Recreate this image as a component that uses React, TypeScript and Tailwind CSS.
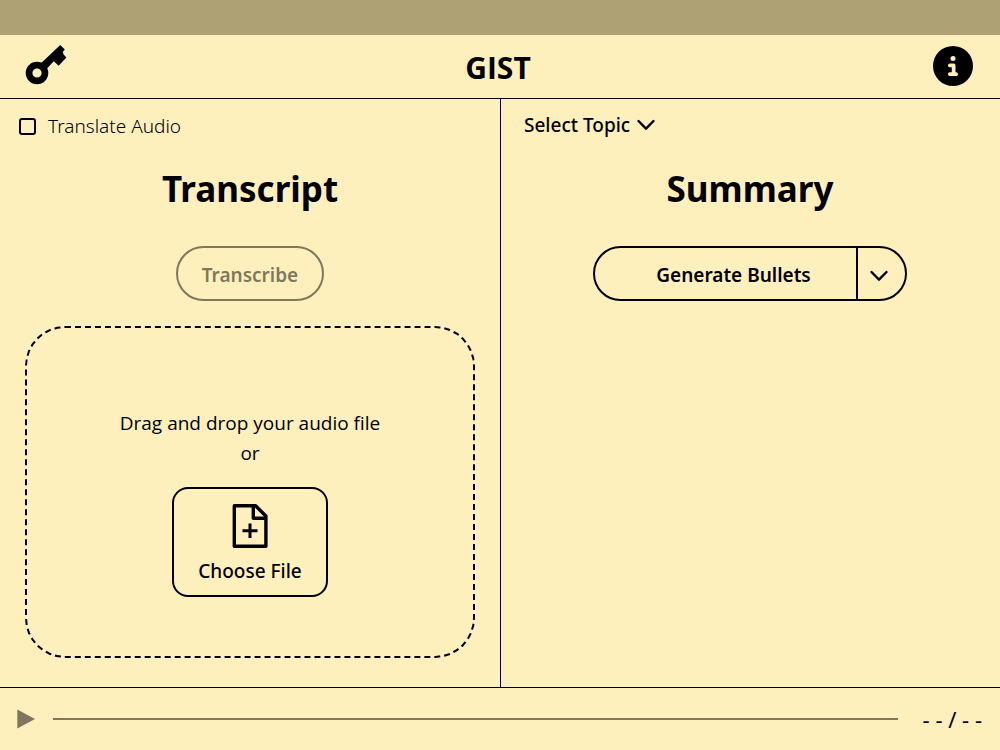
import { useState } from "react";
import { FaCircleInfo } from "react-icons/fa6";

function KeyIcon() {
  return (
    <svg viewBox="0 0 42 42" className="size-[42px]" fill="currentColor" aria-hidden="true">
      <path
        fillRule="evenodd"
        d="M12 16.7a11.3 11.3 0 1 0 0 22.6a11.3 11.3 0 0 0 0-22.6zM12 23.4a4.6 4.6 0 1 1 0 9.2a4.6 4.6 0 0 1 0-9.2z"
      />
      <path d="M15.5 18.8L35.2 0L39.8 4.5L37.8 7L38.6 9.6L41.4 12.6L33.6 20.8L28.8 16.2L21.5 24Z" />
    </svg>
  );
}

function Chevron() {
  return (
    <svg
      viewBox="0 0 18 12"
      className="h-3 w-[18px]"
      fill="none"
      stroke="currentColor"
      strokeWidth="2.4"
      strokeLinecap="round"
      strokeLinejoin="round"
      aria-hidden="true"
    >
      <path d="M1.5 2L9 9.7L16.5 2" />
    </svg>
  );
}

function NewFileIcon() {
  return (
    <svg
      viewBox="0 0 36 44"
      className="h-11 w-9"
      fill="none"
      stroke="currentColor"
      strokeWidth="3.4"
      strokeLinejoin="round"
      aria-hidden="true"
    >
      <path d="M2.3 1.8H23.6L33.9 12V42.2H2.3Z" />
      <path d="M21.3 2V14.3H33.5" />
      <path strokeWidth="3" d="M18 19.5V34M10.5 26.8H25.5" />
    </svg>
  );
}

export default function App() {
  const [translate, setTranslate] = useState(false);
  return (
    <div className="flex min-h-screen flex-col bg-[#fef0bc] font-['Noto_Sans',sans-serif] text-[19px] leading-[30px] text-black">
      <div className="h-[35px] bg-[#aea274]" />
      <header className="flex h-16 items-center justify-between border-b border-black pr-[27px] pb-0.5 pl-[25px]">
        <button type="button" aria-label="API key">
          <KeyIcon />
        </button>
        <h1 className="pt-1 pr-1 font-['Open_Sans',sans-serif] text-[30px] font-bold">GIST</h1>
        <button type="button" aria-label="Information">
          <FaCircleInfo className="size-10" />
        </button>
      </header>

      <main className="grid grow grid-cols-2">
        <section className="flex flex-col pb-[29px]">
          <label className="flex items-center gap-3 self-start pt-3 pl-[19px]">
            <input
              type="checkbox"
              checked={translate}
              onChange={(e) => setTranslate(e.target.checked)}
              className="size-[17px] appearance-none rounded-[3px] border-2 border-black checked:bg-black"
            />
            <span className="font-light">Translate Audio</span>
          </label>
          <h2 className="pt-6 text-center text-[35px] leading-[48px] font-bold">Transcript</h2>
          <button
            type="button"
            disabled
            className="mt-[33px] h-[55px] w-[148px] self-center rounded-full border-2 border-black pt-0.5 font-semibold opacity-50"
          >
            Transcribe
          </button>
          <div className="mx-[25px] mt-[25px] flex grow flex-col items-center justify-center rounded-[40px] border-2 border-dashed border-black pt-5">
            <p className="font-['Open_Sans',sans-serif]">Drag and drop your audio file</p>
            <p className="font-['Open_Sans',sans-serif]">or</p>
            <button
              type="button"
              className="mt-[19px] flex h-[110px] w-[156px] flex-col items-center rounded-2xl border-2 border-black pt-[15px] font-medium"
            >
              <NewFileIcon />
              <span className="mt-2">Choose File</span>
            </button>
          </div>
        </section>

        <section className="flex flex-col border-l border-black pr-px">
          <button
            type="button"
            className="mt-[11px] ml-[23px] flex items-center gap-[7px] self-start font-medium"
          >
            Select Topic
            <Chevron />
          </button>
          <h2 className="pt-[25px] text-center text-[35px] leading-[48px] font-bold">Summary</h2>
          <div className="mt-[33px] flex h-[55px] w-[314px] self-center rounded-full border-2 border-black">
            <button type="button" className="grow pt-0.5 pl-4 font-semibold">
              Generate Bullets
            </button>
            <button
              type="button"
              aria-label="More formats"
              className="flex w-[49px] items-center border-l-2 border-black pt-1 pl-3"
            >
              <Chevron />
            </button>
          </div>
        </section>
      </main>

      <footer className="flex h-[63px] items-center border-t border-black pr-[18px] pl-[17px]">
        <button type="button" disabled aria-label="Play" className="opacity-50">
          <svg viewBox="0 0 18 20" className="h-5 w-[18px]" fill="currentColor" aria-hidden="true">
            <path d="M.3.5L18 10L.3 19.5Z" />
          </svg>
        </button>
        <div className="mr-[25px] ml-[18px] h-0.5 grow bg-black opacity-50" />
        <span className="text-[22px]">- - / - -</span>
      </footer>
    </div>
  );
}
